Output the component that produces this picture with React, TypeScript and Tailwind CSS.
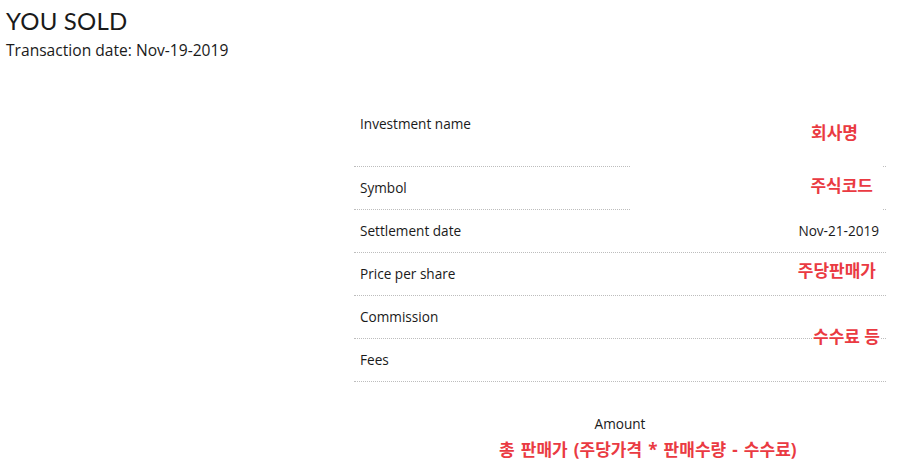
import React from "react";

type Row = { label: string; value?: string; tall?: boolean; note?: string; noteCls?: string };

const rows: Row[] = [
  { label: "Investment name", tall: true },
  { label: "Symbol" },
  { label: "Settlement date", value: "Nov-21-2019" },
  { label: "Price per share", note: "주당판매가", noteCls: "absolute right-[10px] top-[9px] pb-[6px]" },
  { label: "Commission", note: "수수료 등", noteCls: "absolute right-[6px] top-[32px]" },
  { label: "Fees" },
];

const note =
  "bg-white text-[#ea3a42] font-bold text-[17px] leading-[18px] whitespace-nowrap";

export default function App() {
  return (
    <div
      className="relative w-[912px] h-[475px] bg-white text-[#1a1a1a] overflow-hidden"
      style={{ fontFamily: "'Open Sans', 'Noto Sans CJK KR', sans-serif" }}
    >
      <div className="pl-[6px] pt-[6px]">
        <h1
          className="text-[24px] leading-[30px] font-normal tracking-[0.2px]"
          style={{ fontFamily: "Lato, sans-serif" }}
        >
          YOU SOLD
        </h1>
        <p className="text-[15.6px] leading-[20px] mt-[4px]">Transaction date: Nov-19-2019</p>
      </div>

      <div className="relative ml-[354px] w-[532px] mt-[43px]">
        {rows.map((r) => (
          <div
            key={r.label}
            className={`relative flex justify-between border-b border-dotted border-[#bdbdbd] pl-[6px] pr-[7px] text-[13.6px] leading-[18px] ${
              r.tall ? "h-[64px] pt-[12px]" : "h-[43px] items-center"
            }`}
          >
            <span>{r.label}</span>
            {r.value && <span>{r.value}</span>}
            {r.note && <div className={`${note} ${r.noteCls}`}>{r.note}</div>}
          </div>
        ))}

        {/* white patch covering the name & symbol values */}
        <div className="absolute left-[276px] top-[20px] w-[253px] h-[92px] bg-white">
          <div className="flex flex-col items-end pt-[1px] gap-[35px]">
            <div className={`${note} mr-[25px]`}>회사명</div>
            <div className={`${note} mr-[10px]`}>주식코드</div>
          </div>
        </div>

        <div className="text-center text-[13.6px] leading-[18px] mt-[33px]">Amount</div>
        <div className="pl-[145px] mt-[8px] text-[#ea3a42] font-bold text-[17px] leading-[18px] whitespace-nowrap [word-spacing:1.7px]">
          총 판매가 (주당가격 * 판매수량 - 수수료)
        </div>
      </div>
    </div>
  );
}
